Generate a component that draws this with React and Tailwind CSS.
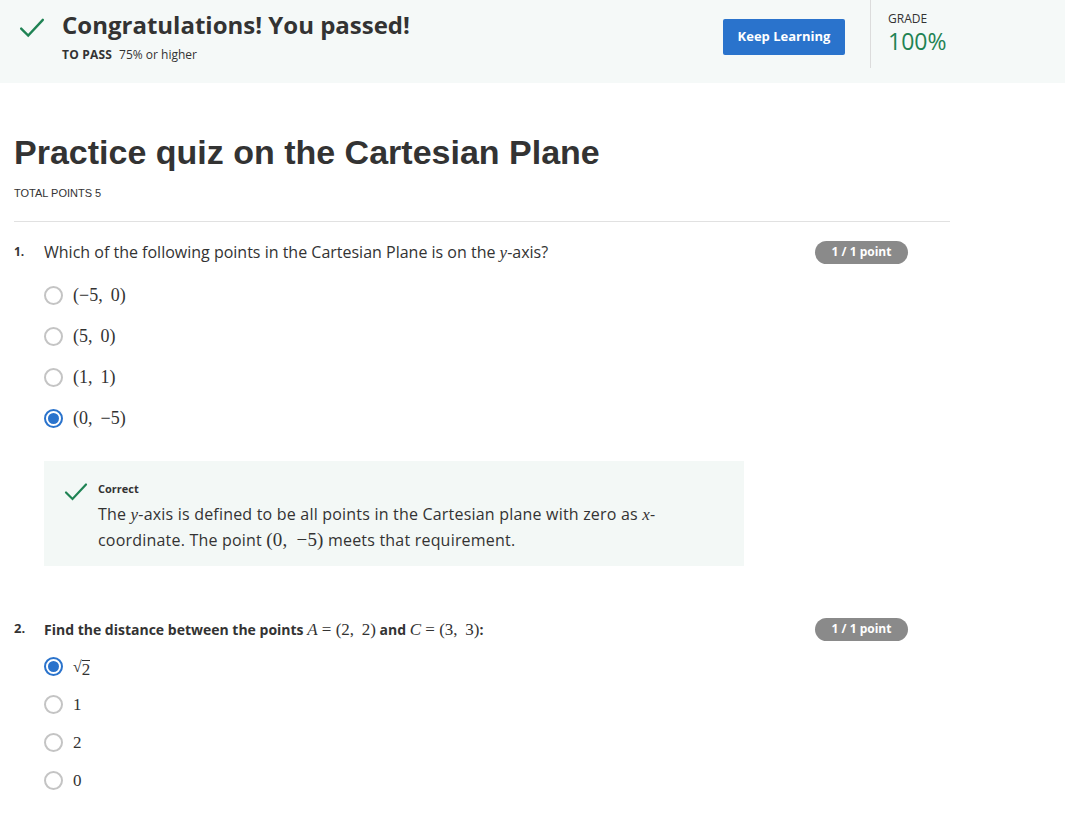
import React from "react";

const sans = "font-['Open_Sans','Noto_Sans',sans-serif]";
const math = "font-['Liberation_Serif','DejaVu_Serif',serif]";

const Check = ({ className }) => (
  <svg className={className} viewBox="0 0 24 24" fill="none" stroke="currentColor" strokeWidth="2.2" strokeLinecap="round">
    <path d="M2 12.5l6.5 6.5L22 4.5" />
  </svg>
);

const Radio = ({ checked }) =>
  checked ? (
    <span className="w-[19px] h-[19px] rounded-full border-[2px] border-[#2a73cc] flex items-center justify-center shrink-0">
      <span className="w-[11px] h-[11px] rounded-full bg-[#2a73cc]" />
    </span>
  ) : (
    <span className="w-[19px] h-[19px] rounded-full border-[2px] border-[#c4c4c4] shrink-0" />
  );

const I = ({ children }) => <span className="italic">{children}</span>;

const PointPill = () => (
  <span className={`${sans} bg-[#8a8a8a] text-white text-[12px] font-bold rounded-full w-[93px] h-[23px] flex items-center justify-center`}>
    1 / 1 point
  </span>
);

const q1Options = [
  { label: "(−5,\u2009 0)", checked: false },
  { label: "(5,\u2009 0)", checked: false },
  { label: "(1,\u2009 1)", checked: false },
  { label: "(0,\u2009 −5)", checked: true },
];

const q2Options = [
  { label: "sqrt", checked: true },
  { label: "1", checked: false },
  { label: "2", checked: false },
  { label: "0", checked: false },
];

export default function App() {
  return (
    <div className="min-h-screen bg-white text-[#333]">
      {/* result banner */}
      <div className="bg-[#f5f9f8] h-[83px] flex">
        <div className="flex pt-[9px] pl-[19px]">
          <Check className="w-[26px] h-[26px] text-[#1f8354] mt-[6px]" />
          <div className="ml-[17px]">
            <h2 className={`${sans} text-[24px] font-bold leading-[31px] text-[#333]`}>
              Congratulations! You passed!
            </h2>
            <p className={`${sans} text-[12px] leading-[16px] mt-[7px] text-[#333]`}>
              <span className="font-bold tracking-[0.2px]">TO PASS</span>
              <span className="ml-[7px]">75% or higher</span>
            </p>
          </div>
        </div>
        <div className="ml-auto flex">
          <button className={`${sans} mt-[19px] w-[122px] h-[36px] bg-[#2a73cc] text-white text-[13px] font-bold rounded-[2px]`}>
            Keep Learning
          </button>
          <div className="w-px h-[68px] bg-[#dcdcdc] ml-[25px]" />
          <div className="pl-[17px] pt-[10px] w-[194px]">
            <div className={`${sans} text-[12px] text-[#333]`}>GRADE</div>
            <div className={`${sans} text-[23px] leading-[27px] text-[#1f8354]`}>100%</div>
          </div>
        </div>
      </div>

      {/* quiz body */}
      <div className="pl-[14px] w-[950px]">
        <h1 className="font-['Liberation_Sans',Arial,sans-serif] text-[34px] font-bold leading-[40px] mt-[49px] text-[#333]">
          Practice quiz on the Cartesian Plane
        </h1>
        <div className="font-['Liberation_Sans',Arial,sans-serif] text-[11px] mt-[13px] text-[#333]">TOTAL POINTS 5</div>
        <div className="h-px bg-[#e1e1e1] mt-[19px]" />

        {/* question 1 */}
        <div className="flex items-center mt-[19px]">
          <span className={`${sans} text-[12px] font-bold w-[30px]`}>1.</span>
          <span className={`${sans} text-[16px] leading-[23px]`}>
            Which of the following points in the Cartesian Plane is on the <span className={`${math} italic text-[17px] leading-none`}>y</span>-axis?
          </span>
          <span className="ml-auto mr-[42px]">
            <PointPill />
          </span>
        </div>
        <div className="pl-[30px] mt-[22px] flex flex-col gap-[21px]">
          {q1Options.map((o) => (
            <label key={o.label} className="flex items-center h-[20px]">
              <Radio checked={o.checked} />
              <span className={`${math} text-[18px] ml-[10px] text-[#333]`}>{o.label}</span>
            </label>
          ))}
        </div>

        <div className="ml-[30px] mt-[32px] w-[700px] h-[105px] bg-[#f3f8f6] flex pt-[19px] pl-[20px]">
          <Check className="w-[24px] h-[24px] text-[#1f8354] shrink-0" />
          <div className="ml-[10px]">
            <div className={`${sans} text-[11px] font-bold leading-[18px]`}>Correct</div>
            <p className={`${sans} text-[16px] leading-[26px] mt-[3px] w-[575px] tracking-[0.2px]`}>
              The <span className={`${math} italic text-[17px] leading-none`}>y</span>-axis is defined to be all points in the Cartesian plane with zero as{" "}
              <span className={`${math} italic text-[17px] leading-none`}>x</span>-coordinate. The point{" "}
              <span className={`${math} text-[19px] leading-none`}>(0,{"\u2009"} −5)</span> meets that requirement.
            </p>
          </div>
        </div>

        {/* question 2 */}
        <div className="flex items-center mt-[52px]">
          <span className={`${sans} text-[13px] font-bold w-[30px]`}>2.</span>
          <span className={`${sans} text-[14px] font-bold`}>
            Find the distance between the points{" "}
            <span className={`${math} font-normal text-[17px] leading-none`}>
              <I>A</I> = (2,{"\u2009"} 2)
            </span>{" "}
            and{" "}
            <span className={`${math} font-normal text-[17px] leading-none`}>
              <I>C</I> = (3,{"\u2009"} 3)
            </span>
            :
          </span>
          <span className="ml-auto mr-[42px]">
            <PointPill />
          </span>
        </div>
        <div className="pl-[30px] mt-[16px] flex flex-col gap-[18px]">
          {q2Options.map((o) => (
            <label key={o.label} className="flex items-center h-[20px]">
              <Radio checked={o.checked} />
              <span className={`${math} text-[17px] ml-[10px] text-[#333]`}>
                {o.label === "sqrt" ? (
                  <span className="inline-flex items-end">
                    <span className="text-[16px]">√</span>
                    <span className="border-t border-[#333] leading-[18px]">2</span>
                  </span>
                ) : (
                  o.label
                )}
              </span>
            </label>
          ))}
        </div>
      </div>
    </div>
  );
}
